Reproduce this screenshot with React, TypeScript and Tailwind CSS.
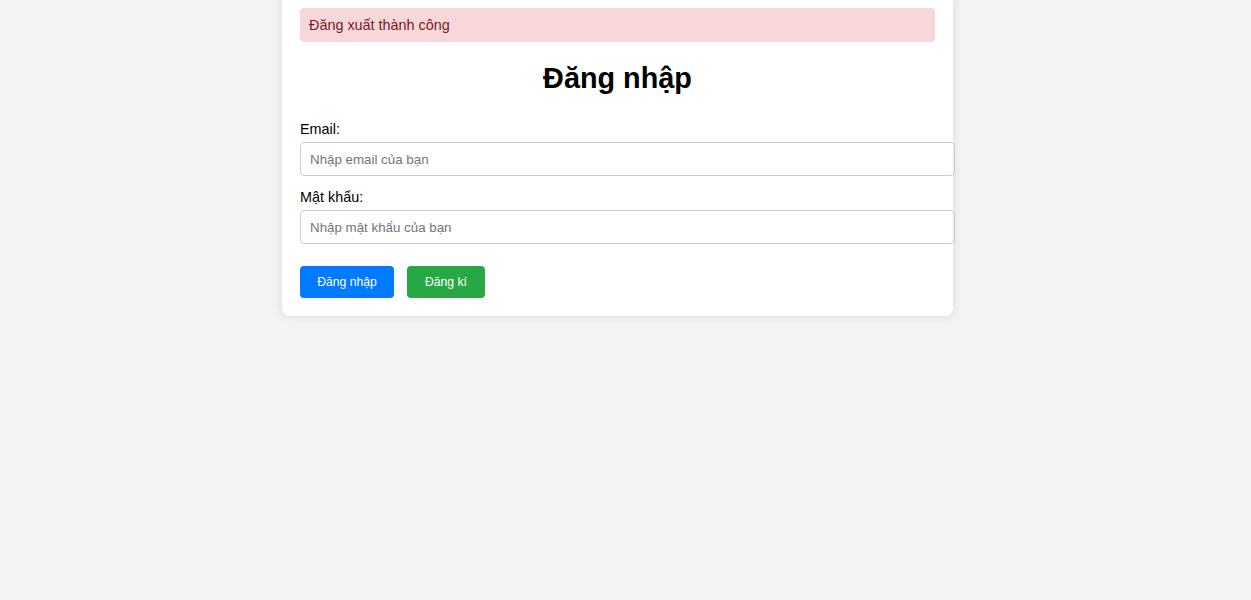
export default function App() {
  return (
    <div className="h-screen overflow-hidden bg-[#f3f3f3] pr-4 font-['Liberation_Sans',Arial,sans-serif]">
      <div className="mx-auto -mt-[10px] w-[671px] rounded-lg bg-white px-[18px] pb-[18px] pt-[18px] shadow-[0_0_10px_rgba(0,0,0,0.1)]">
        <div className="flex h-[34px] items-center rounded bg-[#f8d7da] px-[9px] pt-[2px] text-[14.4px] text-[#721c24]">
          Đăng xuất thành công
        </div>
        <h2 className="mt-[19px] mb-[26px] text-center text-[28.8px] font-bold leading-[34px] text-black">
          Đăng nhập
        </h2>
        <form>
          <label className="block text-[14.4px] leading-[17px] text-black">Email:</label>
          <input
            type="email"
            placeholder="Nhập email của bạn"
            className="mt-[4px] block h-[34px] w-[655px] rounded border border-[#ccc] px-[9px] text-[13.33px] placeholder:text-[#757575] outline-none"
          />
          <label className="mt-[13px] block text-[14.4px] leading-[17px] text-black">Mật khẩu:</label>
          <input
            type="password"
            placeholder="Nhập mật khẩu của bạn"
            className="mt-[4px] block h-[34px] w-[655px] rounded border border-[#ccc] px-[9px] text-[13.33px] placeholder:text-[#757575] outline-none"
          />
          <div className="mt-[22px] flex gap-[13px]">
            <button type="button" className="h-[32px] w-[94px] rounded bg-[#007bff] text-[12.2px] text-white">
              Đăng nhập
            </button>
            <button type="button" className="h-[32px] w-[78px] rounded bg-[#28a745] text-[12.2px] text-white">
              Đăng kí
            </button>
          </div>
        </form>
      </div>
    </div>
  );
}
